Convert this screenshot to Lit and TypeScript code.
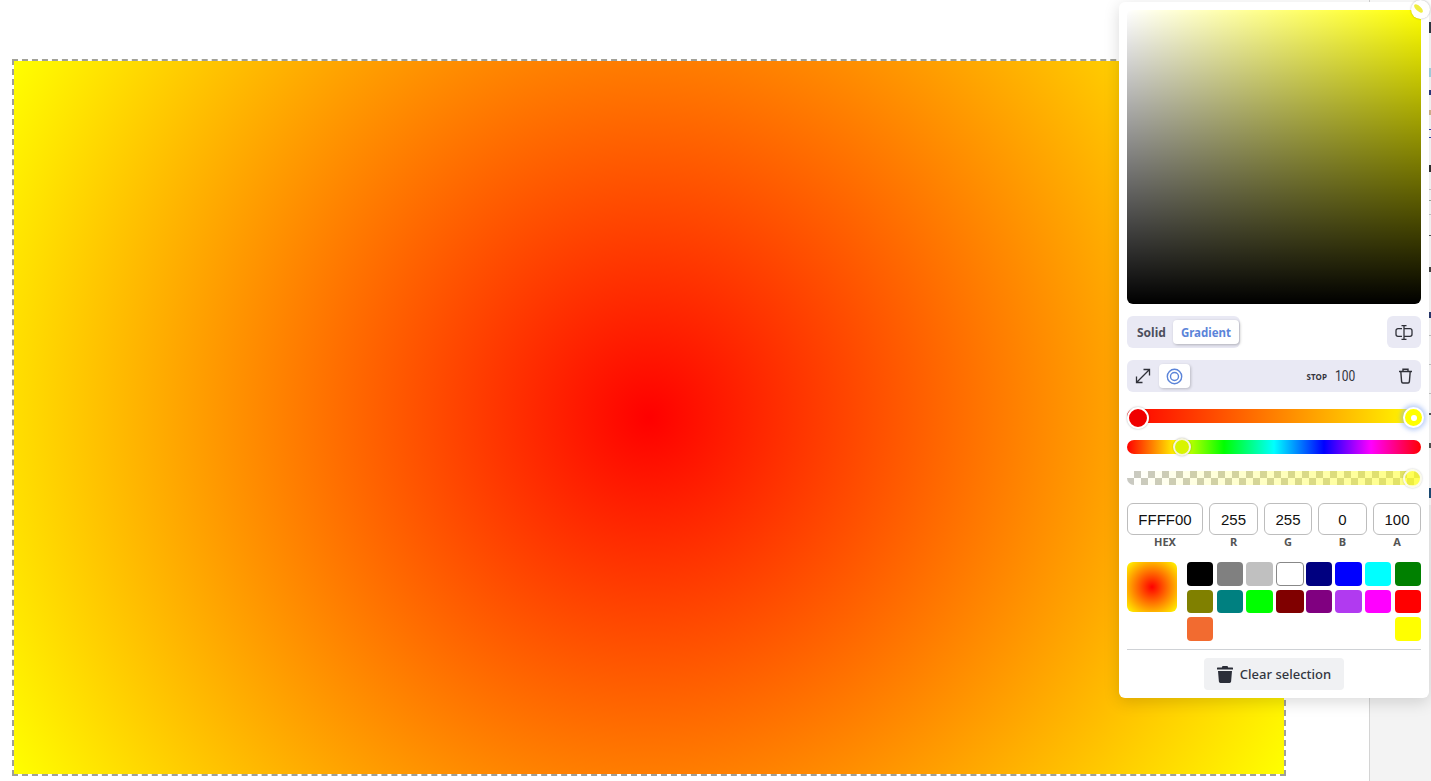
import { LitElement, html, css } from "lit";
import { customElement } from "lit/decorators.js";

const swatches = [
  ["#000000", "#808080", "#c0c0c0", "#ffffff", "#000080", "#0000ff", "#00ffff", "#008000"],
  ["#808000", "#008080", "#00ff00", "#800000", "#800080", "#b13af0", "#ff00ff", "#ff0000"],
  ["#f26b30", "", "", "", "", "", "", "#ffff00"],
];
const swatchWidths = [26, 26, 27, 28, 26, 27, 26, 26];

const marks: [number, number, string][] = [
  [22, 11, "#333a45"], [68, 9, "#a8d8e8"], [90, 5, "#2a3a80"], [110, 5, "#d8b890"],
  [129, 1, "#3040b0"], [137, 1, "#3040b0"], [165, 7, "#333"], [189, 1, "#c8c8c8"],
  [200, 1, "#a0b0a0"], [214, 1, "#c8c8c8"], [235, 1, "#555"], [267, 5, "#444"],
  [312, 6, "#2a3a70"], [335, 1, "#c8c8c8"], [364, 1, "#c8c8c8"], [393, 1, "#c8c8c8"],
  [413, 2, "#555"], [443, 5, "#555"], [488, 10, "#1d4f7a"],
];

@customElement("app-root")
export class AppRoot extends LitElement {
  static styles = css`
    :host { display: block; height: 781px; overflow: hidden; position: relative; background: #fff; font-family: "Noto Sans", "Open Sans", sans-serif; }
    .page { display: flex; height: 781px; }
    .stage { flex: 1; padding: 59px 0 0 12px; }
    .canvas { width: 1274px; height: 717px; box-sizing: border-box; border: 2px dashed #a0a098; background: radial-gradient(circle at 50% 50%, #ff0000, #ffff00); background-clip: padding-box; }
    .side { width: 61px; border-left: 1px solid #d4d4d4; background: #f3f3f3; display: flex; flex-direction: column; }
    .side-top { height: 505px; background: #fff; position: relative; }
    .mark { position: absolute; right: 0; width: 2px; }
    .popup { position: absolute; left: 1119px; top: 2px; width: 310px; height: 696px; box-sizing: border-box; padding: 8px; background: #fff; border-radius: 6px; box-shadow: 0 4px 16px rgba(0,0,0,.15); display: flex; flex-direction: column; }
    .sv { height: 294px; border-radius: 6px; background: linear-gradient(to top, #000, rgba(0,0,0,0)), linear-gradient(to right, #fff, rgba(255,255,255,0)), #ffff00; position: relative; flex: none; }
    .sv-thumb { position: absolute; right: -9px; top: -10px; width: 19px; height: 19px; border-radius: 50%; background: #fff; box-shadow: 0 0 2px rgba(0,0,0,.3); }
    .sv-thumb i { position: absolute; left: 2px; top: 6px; width: 11px; height: 5px; border-radius: 50%; background: #f0ee40; transform: rotate(42deg); display: block; }
    .row1 { display: flex; justify-content: space-between; margin-top: 12px; height: 32px; flex: none; }
    .tabs { display: flex; align-items: center; background: #e9e9f4; border-radius: 6px; padding: 0 1px 0 0; height: 32px; box-sizing: border-box; }
    .tab { font-size: 12px; font-weight: 700; color: #4d4f5c; padding: 0 7px 0 10px; line-height: 26px; height: 24px; }
    .tab.on { background: #fff; color: #5b84d9; border-radius: 4px; padding: 0 8px; font-size: 11.5px; box-shadow: 1px 1px 3px rgba(0,0,0,.25); }
    .ibtn { width: 34px; height: 32px; background: #e9e9f4; border-radius: 6px; display: flex; align-items: center; justify-content: center; }
    .row2 { display: flex; align-items: center; height: 32px; margin-top: 12px; background: #e9e9f4; border-radius: 6px; flex: none; }
    .arrow { width: 32px; display: flex; justify-content: center; }
    .circ { width: 31px; height: 24px; background: #fff; border-radius: 4px; box-shadow: 1px 1px 3px rgba(0,0,0,.2); display: flex; align-items: center; justify-content: center; }
    .spacer { flex: 1; }
    .stop { font-size: 8px; font-weight: 700; color: #33343d; margin-right: 8px; letter-spacing: .1px; }
    .stopv { font-family: "Roboto", sans-serif; font-size: 15px; color: #33343d; width: 21px; margin-right: 42px; transform: scaleX(.8); transform-origin: left; }
    .trash { margin-right: 8px; display: flex; }
    .track { height: 14px; border-radius: 7px; position: relative; flex: none; }
    .grad { margin-top: 17px; background: linear-gradient(to right, #ff0000, #ffff00); }
    .hue { margin-top: 17px; background: linear-gradient(to right, #f00 0%, #ff0 17%, #0f0 33%, #0ff 50%, #00f 67%, #f0f 83%, #f00 100%); }
    .alpha { margin-top: 17px; background-image: linear-gradient(to right, rgba(255,255,0,0), rgba(255,255,0,.5)), conic-gradient(#c9c9c2 25%, #fff 0 50%, #c9c9c2 0 75%, #fff 0); background-size: 100% 100%, 14px 14px; }
    .thumb { position: absolute; border-radius: 50%; box-sizing: border-box; }
    .t-red { left: 0; top: -2px; width: 22px; height: 22px; border: 2px solid #fff; background: #f00000; box-shadow: 0 0 2px rgba(0,0,0,.3); }
    .t-yellow { right: -3px; top: -2px; width: 21px; height: 21px; border: 2px solid #fff; background: #ffff00; box-shadow: 0 0 5px 2px rgba(130,165,240,.6); display: flex; align-items: center; justify-content: center; }
    .t-yellow i { width: 6px; height: 6px; border-radius: 50%; background: #fff; display: block; }
    .t-hue { left: 46px; top: -2px; width: 18px; height: 18px; border: 2px solid #f6f6dc; background: #d8f400; box-shadow: 0 0 2px rgba(0,0,0,.3); }
    .t-alpha { right: -1px; top: -2px; width: 19px; height: 19px; border: 2px solid #fbfbe8; background: rgba(255,255,0,.35); box-shadow: 0 0 2px rgba(0,0,0,.25); }
    .inputs { display: flex; justify-content: space-between; margin-top: 18px; flex: none; }
    .field { display: flex; flex-direction: column; align-items: center; }
    .val { box-sizing: border-box; height: 32px; border: 1px solid #bdbdbd; border-radius: 6px; font-family: "Liberation Sans", Arial, sans-serif; font-size: 15px; color: #111; display: flex; align-items: center; justify-content: center; }
    .lab { font-size: 11px; font-weight: 700; color: #555; line-height: 14px; }
    .colors { display: flex; margin-top: 13px; flex: none; }
    .preview { width: 50px; height: 50px; border-radius: 6px; background: radial-gradient(circle, #ff0000, #ffff00); flex: none; margin-right: 10px; }
    .grid { display: grid; grid-template-columns: 30px 29px 30px 30px 29px 30px 30px 26px; grid-template-rows: 24px 23px 24px; row-gap: 4px; flex: 1; }
    .sw { border-radius: 4px; box-sizing: border-box; }
    .sw.white { border: 1px solid #888; }
    .divider { border-top: 1px solid #cfd2d6; margin-top: 8px; flex: none; }
    .clear-wrap { display: flex; justify-content: center; margin-top: 8px; }
    .clear { height: 32px; width: 140px; background: #f0f1f3; border-radius: 4px; display: flex; align-items: center; justify-content: center; gap: 7px; font-size: 13px; font-weight: 500; color: #33363f; }
  `;

  render() {
    return html`
      <div class="page">
        <div class="stage"><div class="canvas"></div></div>
        <div class="side">
          <div class="side-top">
            ${marks.map(([t, h, c]) => html`<span class="mark" style="top:${t}px;height:${h}px;background:${c}"></span>`)}
          </div>
        </div>
      </div>
      <div class="popup">
        <div class="sv"><div class="sv-thumb"><i></i></div></div>
        <div class="row1">
          <div class="tabs"><span class="tab">Solid</span><span class="tab on">Gradient</span></div>
          <div class="ibtn">
            <svg width="18" height="15" viewBox="0 0 18 15" fill="none" stroke="#2f3038" stroke-width="1.3">
              <path d="M9 .7v13.600M6.500.7h5M6.500 14.300h5M7 3.700H3a2 2 0 0 0-2 2v3.600a2 2 0 0 0 2 2h4M9 3.700h6a2 2 0 0 1 2 2v3.600a2 2 0 0 1-2 2H9"/>
            </svg>
          </div>
        </div>
        <div class="row2">
          <div class="arrow">
            <svg width="16" height="16" viewBox="0 0 16 16" fill="none" stroke="#2f3038" stroke-width="1.3">
              <path d="M1.500 14.500 14.500 1.500M8.500 1.500h6v6M1.500 8.500v6h6"/>
            </svg>
          </div>
          <div class="circ">
            <svg width="17" height="17" viewBox="0 0 17 17" fill="none" stroke="#5b84d9" stroke-width="1.4">
              <circle cx="8.500" cy="8.500" r="7.200"/><circle cx="8.500" cy="8.500" r="4"/>
            </svg>
          </div>
          <span class="spacer"></span>
          <span class="stop">STOP</span>
          <span class="stopv">100</span>
          <span class="trash">
            <svg width="15" height="16" viewBox="0 0 15 16" fill="none" stroke="#2f3038" stroke-width="1.4">
              <path d="M1 3.500h13M5 3.500V1.200h5v2.300M2.800 3.500l.8 10.200c.1.800.6 1.300 1.300 1.300h5.200c.7 0 1.200-.5 1.300-1.300l.8-10.200"/>
            </svg>
          </span>
        </div>
        <div class="track grad"><div class="thumb t-red"></div><div class="thumb t-yellow"><i></i></div></div>
        <div class="track hue"><div class="thumb t-hue"></div></div>
        <div class="track alpha"><div class="thumb t-alpha"></div></div>
        <div class="inputs">
          ${[["FFFF00", "HEX", 76], ["255", "R", 49], ["255", "G", 48], ["0", "B", 49], ["100", "A", 48]].map(
            ([v, l, w]) => html`<div class="field"><div class="val" style="width:${w}px">${v}</div><div class="lab">${l}</div></div>`
          )}
        </div>
        <div class="colors">
          <div class="preview"></div>
          <div class="grid">
            ${swatches.flat().map((c, i) =>
              c
                ? html`<div class="sw ${c === "#ffffff" ? "white" : ""}" style="background:${c};width:${swatchWidths[i % 8]}px"></div>`
                : html`<div></div>`
            )}
          </div>
        </div>
        <div class="divider"></div>
        <div class="clear-wrap">
          <div class="clear">
            <svg width="16" height="17" viewBox="0 0 16 17" fill="#2b2e38">
              <path d="M5.500 0h5l.7 1.500H15.500c.3 0 .5.2.5.5v1.500H0V2c0-.3.2-.5.5-.5h4.300zM1 5h14l-.9 10.600c-.1.800-.7 1.400-1.500 1.400H3.400c-.8 0-1.400-.6-1.500-1.400z"/>
            </svg>
            <span>Clear selection</span>
          </div>
        </div>
      </div>
    `;
  }
}
